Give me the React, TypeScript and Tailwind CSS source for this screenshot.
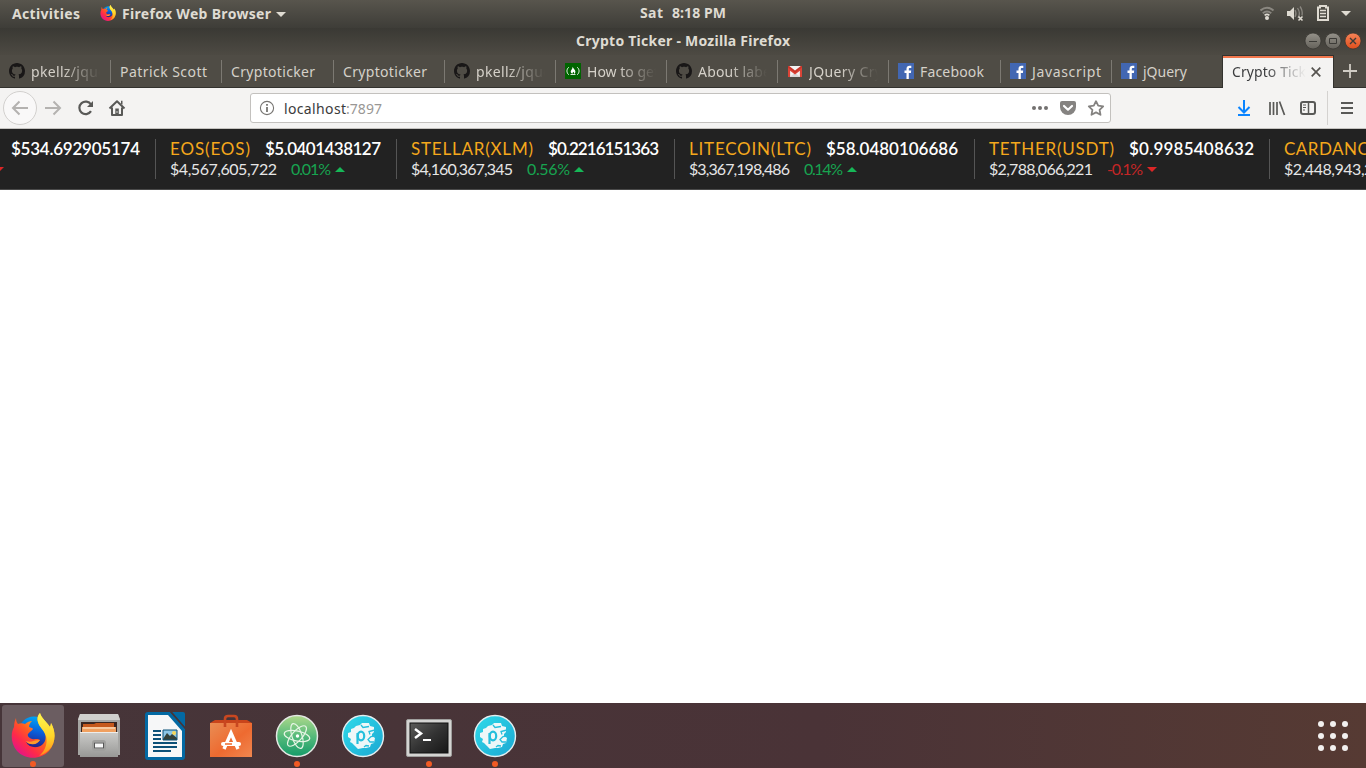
import { useLayoutEffect, useRef } from "react";
import type { ReactNode } from "react";

/* Spreads one line of text so that it fills the width of its box. */
function Fit({ children, className }: { children: string; className: string }) {
  const box = useRef<HTMLSpanElement>(null);
  const text = useRef<HTMLSpanElement>(null);
  useLayoutEffect(() => {
    if (!box.current || !text.current) return;
    text.current.style.letterSpacing = "0px";
    const spare = box.current.clientWidth - text.current.getBoundingClientRect().width;
    text.current.style.letterSpacing = `${spare / Math.max(1, children.length - 1)}px`;
  }, [children]);
  return (
    <span ref={box} className={`block shrink-0 whitespace-pre ${className}`}>
      <span ref={text} className="inline-block">{children}</span>
    </span>
  );
}

function FirefoxLogo({ className, id }: { className: string; id: string }) {
  return (
    <svg viewBox="0 0 44 45" className={className}>
      <defs>
        <linearGradient id={`${id}a`} x1="0.85" y1="0.1" x2="0.15" y2="0.9">
          <stop offset="0" stopColor="#ffd83f" />
          <stop offset="0.25" stopColor="#ffa01e" />
          <stop offset="0.5" stopColor="#ff5a22" />
          <stop offset="0.75" stopColor="#ff2a4a" />
          <stop offset="1" stopColor="#e31587" />
        </linearGradient>
        <linearGradient id={`${id}b`} x1="0.6" y1="0" x2="0.4" y2="1">
          <stop offset="0" stopColor="#00a8f5" />
          <stop offset="0.5" stopColor="#0a5cd8" />
          <stop offset="1" stopColor="#2b1b80" />
        </linearGradient>
        <linearGradient id={`${id}c`} x1="0" y1="0" x2="0" y2="1">
          <stop offset="0" stopColor="#fff750" />
          <stop offset="0.55" stopColor="#ffd428" />
          <stop offset="1" stopColor="#ff8a1a" />
        </linearGradient>
      </defs>
      <circle cx="23" cy="19" r="15.500" fill={`url(#${id}b)`} />
      <path d="M5 5 C5 8 6 10 7 11 C9 10 12 10 14 11 C16 9 19 8 21 8 C19 10 18 12 18 14 C20 15 22 15 22 16 C21 18 18 19 17 21 C16 23 18 25 21 26 C24 27 26 25 29 27 C27 29 26 31 22 31 C19 31 17 30 15 29 C18 35 27 36 32 31 C37 26 34 17 29 13 C26 9 25 4 29 0 C30 5 36 9 39 14 C40 13 40 12 40 10 C45 18 45 30 38 38 C30 47 14 47 6 38 C-1 30 0 19 3 14 C3 10 4 7 5 5Z" fill={`url(#${id}a)`} />
      <path d="M29 0 C30 5 36 9 39 14 L40 10 C45 19 45 30 38 37 C35 40 31 42 28 43 C34 38 37 30 35 23 C33 17 28 14 27 9 C26 5 27 2 29 0Z" fill={`url(#${id}c)`} />
      <path d="M15 28 C20 30 23 27 29 27 C27 30 24 32 20 31 C18 31 16 30 15 28Z" fill="#ff9a2b" />
    </svg>
  );
}

function GithubMark() {
  return (
    <svg viewBox="0 0 16 16" className="size-4 shrink-0" fill="#191717">
      <path d="M8 0C3.58 0 0 3.58 0 8c0 3.54 2.29 6.53 5.47 7.59.4.07.55-.17.55-.38 0-.19-.01-.82-.01-1.49-2.01.37-2.53-.49-2.69-.94-.09-.23-.48-.94-.82-1.13-.28-.15-.68-.52-.01-.53.63-.01 1.08.58 1.23.82.72 1.21 1.87.87 2.33.66.07-.52.28-.87.51-1.07-1.78-.2-3.64-.89-3.64-3.95 0-.87.31-1.59.82-2.15-.08-.2-.36-1.02.08-2.12 0 0 .67-.21 2.2.82.64-.18 1.32-.27 2-.27s1.36.09 2 .27c1.53-1.04 2.2-.82 2.2-.82.44 1.1.16 1.92.08 2.12.51.56.82 1.27.82 2.15 0 3.07-1.87 3.75-3.65 3.95.29.25.54.73.54 1.48 0 1.07-.01 1.93-.01 2.2 0 .21.15.46.55.38A8.01 8.01 0 0 0 16 8c0-4.42-3.58-8-8-8Z" />
    </svg>
  );
}

function FacebookMark() {
  return (
    <svg viewBox="0 0 16 16" className="size-4 shrink-0">
      <rect width="16" height="16" fill="#4267b2" />
      <path d="M8.500 16V9.900h-2V7.500h2V5.800c0-2 1.200-3.100 3-3.100.9 0 1.600.1 1.800.1v2.100H12c-1 0-1.200.5-1.200 1.200v1.400h2.400l-.3 2.400h-2.100V16Z" fill="#fff" />
    </svg>
  );
}

function CampMark() {
  return (
    <svg viewBox="0 0 16 16" className="size-4 shrink-0">
      <rect width="16" height="16" fill="#006400" />
      <path d="M3.800 4.200C1.300 6.200 1.300 9.800 3.800 11.800M12.200 4.200c2.500 2 2.500 5.600 0 7.600M5.500 11.500h5" fill="none" stroke="#d8ead8" />
      <path d="M7.700 3.700c.4 2 2.700 2.800 2.700 5 0 1.200-.8 2-1.500 2.100.5-.9 0-1.500-.7-2-.2.8-.9 1.100-.5 2-1.100-.2-2-1-2-2.200 0-1.800 2-2.300 2-4.900Z" fill="#fff" />
    </svg>
  );
}

function GmailMark() {
  return (
    <svg viewBox="0 0 16 16" className="size-4 shrink-0">
      <path d="M1 3h14v11H1Z" fill="#f2f2f2" />
      <path d="m3 14 5-4.500L13 14Z" fill="#d9d9d9" />
      <path d="M1 14V3.600L8 9l7-5.400V14h-2.100V7.700L8 11.400 3.100 7.700V14Z" fill="#db4437" />
      <path d="M1 3h1.200L8 7.600 13.800 3H15v1.500L8 9.700 1 4.500Z" fill="#c93428" />
    </svg>
  );
}

type TabInfo = { label: string; icon?: ReactNode; size: string; fit: string; fade?: boolean };

const tabs: TabInfo[] = [
  { label: "pkellz/jque", icon: <GithubMark />, size: "w-[111px]", fit: "w-[75px]", fade: true },
  { label: "Patrick Scott", size: "w-[111px]", fit: "w-[87px]" },
  { label: "Cryptoticker", size: "w-[112px]", fit: "w-[84px]" },
  { label: "Cryptoticker", size: "w-[111px]", fit: "w-[84px]" },
  { label: "pkellz/jque", icon: <GithubMark />, size: "w-[111px]", fit: "w-[75px]", fade: true },
  { label: "How to get", icon: <CampMark />, size: "w-[111px]", fit: "w-[72px]", fade: true },
  { label: "About labe", icon: <GithubMark />, size: "w-[111px]", fit: "w-[73px]", fade: true },
  { label: "JQuery Cry", icon: <GmailMark />, size: "w-[111px]", fit: "w-[73px]", fade: true },
  { label: "Facebook", icon: <FacebookMark />, size: "w-[112px]", fit: "w-[64px]" },
  { label: "Javascript", icon: <FacebookMark />, size: "w-[111px]", fit: "w-[69px]" },
  { label: "jQuery", icon: <FacebookMark />, size: "w-[110px]", fit: "w-[44px]" },
];

function Tab({ tab, last }: { tab: TabInfo; last: boolean }) {
  return (
    <div className={`flex h-[23px] shrink-0 items-center gap-1.5 pl-[9px] pr-[10px] ${tab.size} ${last ? "" : "border-r border-[#7c7972]"}`}>
      {tab.icon}
      <div className={`min-w-0 flex-1 pt-0.5 ${tab.fade ? "overflow-hidden [mask-image:linear-gradient(to_right,black_45%,transparent_100%)]" : ""}`}>
        <Fit className={tab.fit}>{tab.label}</Fit>
      </div>
    </div>
  );
}

function SystemPanel() {
  return (
    <div className="flex h-7 bg-linear-to-b from-[#58554d] to-[#3e3d38] text-sm font-bold text-[#dfdbd2]">
      <div className="flex w-[640px] items-center pl-3">
        <Fit className="w-[68px]">Activities</Fit>
        <FirefoxLogo id="p" className="ml-5 size-4 -translate-y-px" />
        <Fit className="ml-1.5 w-[149px]">Firefox Web Browser</Fit>
        <svg viewBox="0 0 10 5" className="ml-[5px] h-[5px] w-2.5"><path d="M0 0h10L5 5Z" fill="#dfdbd2" /></svg>
      </div>
      <div className="flex flex-1 items-center pb-0.5">
        <Fit className="w-[23px]">Sat</Fit>
        <Fit className="ml-[9px] w-[54px]">8:18 PM</Fit>
      </div>
      <svg viewBox="0 0 106 28" className="h-7 w-[106px]">
        <g fill="none" stroke="#8a8780" strokeWidth="2">
          <path d="M.5 10.500q6.500-5.500 13 0" /><path d="M2.800 13.200q4.200-3.500 8.400 0" />
        </g>
        <path d="M4.600 15.300q2.400-2 4.800 0" fill="none" stroke="#dfdbd2" strokeWidth="1.600" />
        <circle cx="7" cy="18" r="2" fill="#dfdbd2" />
        <path d="M27 11h3l4-4v13l-4-4h-3Z" fill="#dfdbd2" />
        <path d="M35 10q2 3.500 0 7M37.500 8q3.500 5 .5 10M40 6.500q3 4 2 9" fill="none" stroke="#8a8780" strokeWidth="1.300" />
        <path d="m38.500 16.500 4 4m0-4-4 4" stroke="#dfdbd2" strokeWidth="1.600" />
        <path d="M58 7.500h2V6h6v1.500h2V20H58Z" fill="none" stroke="#dfdbd2" strokeWidth="2" />
        <path d="M60 10.500h6M60 13.500h6M60 16.500h6" stroke="#dfdbd2" strokeWidth="1.500" />
        <path d="M81 11h10l-5 5Z" fill="#dfdbd2" />
      </svg>
    </div>
  );
}

function TitleBar() {
  return (
    <div className="flex h-[27px] bg-linear-to-b from-[#3a3934] to-[#4d4a43] text-sm font-bold text-[#dfdbd2]">
      <div className="flex flex-1 items-center pb-px pl-[576px]"><Fit className="w-[214px]">Crypto Ticker - Mozilla Firefox</Fit></div>
      <svg viewBox="0 0 62 27" className="h-[27px] w-[62px]">
        <defs>
          <linearGradient id="btn" x1="0" y1="0" x2="0" y2="1"><stop stopColor="#95928a" /><stop offset="1" stopColor="#64615a" /></linearGradient>
          <linearGradient id="cls" x1="0" y1="0" x2="0" y2="1"><stop stopColor="#f68458" /><stop offset="1" stopColor="#e04e1c" /></linearGradient>
        </defs>
        <g stroke="#35342f" strokeWidth=".7">
          <circle cx="9" cy="13" r="8" fill="url(#btn)" /><circle cx="29" cy="13" r="8" fill="url(#btn)" /><circle cx="49" cy="13" r="8" fill="url(#cls)" />
        </g>
        <g stroke="#3c3b37" fill="none" strokeWidth="1">
          <path d="M5 13.500h8" /><path d="M25.500 10.500h7v5h-7Z" /><path d="m46 10 6 6m0-6-6 6" strokeWidth="1.400" />
        </g>
      </svg>
    </div>
  );
}

function TabBar() {
  return (
    <div className="flex h-[33px] bg-[#4f4c45] text-sm text-[#d5d1c9]">
      <div className="flex h-[33px] w-[1222px] items-center border-b border-[#33322e]">
        {tabs.map((tab, i) => <Tab key={i} tab={tab} last={i === tabs.length - 1} />)}
      </div>
      <div className="flex w-28 shrink-0 flex-col border-x border-t border-[#33322e] bg-[#f4f3f2]">
        <div className="h-0.5 bg-[#f1764c]" />
        <div className="flex flex-1 items-center pb-[3px] pl-[9px] text-[#3c3d3f]">
          <div className="w-[74px] overflow-hidden [mask-image:linear-gradient(to_right,black_45%,transparent_100%)]"><Fit className="w-[74px]">Crypto Tick</Fit></div>
          <svg viewBox="0 0 10 10" className="ml-[5px] size-2.5" stroke="#55534f" strokeWidth="1.700"><path d="m.7.7 8.600 8.600m0-8.600L.7 9.300" /></svg>
        </div>
      </div>
      <div className="flex h-[33px] flex-1 items-center border-b border-[#33322e] pl-[9px]">
        <svg viewBox="0 0 14 14" className="size-3.5" stroke="#d0ccc4" strokeWidth="1.800"><path d="M7 0v14M0 7h14" /></svg>
      </div>
    </div>
  );
}

function NavBar() {
  return (
    <div className="flex h-[41px] items-center border-b border-[#c5c3c0] bg-[#f4f3f2] text-sm">
      <svg viewBox="0 0 250 40" className="h-10 w-[250px] shrink-0" fill="none" strokeWidth="2">
        <circle cx="20" cy="20" r="16.500" fill="#f9f8f8" stroke="#d2d0ce" strokeWidth="1" />
        <path d="M28 20H13m6.500-6.500L13 20l6.500 6.500" stroke="#b4b2b0" />
        <path d="M45 20h15m-6.500-6.500L60 20l-6.500 6.500" stroke="#b4b2b0" />
        <path d="M91 16.500A6.300 6.300 0 1 0 91 23.200" stroke="#595957" strokeWidth="2.200" />
        <path d="M93 13v6h-6Z" fill="#595957" />
        <path d="m109.500 20.500 7.500-7.300 7.500 7.300M112 19.500V27h10v-7.500" stroke="#595957" strokeLinejoin="round" />
        <path d="M121 12.800h1.500v4l-1.500-1.500Z" fill="#595957" /><path d="M115.300 27v-6.500h3.500V27Z" fill="#595957" />
        <circle cx="117" cy="24" r=".7" fill="#fff" />
      </svg>
      <div className="flex h-[30px] w-[861px] shrink-0 items-center rounded-[3px] border border-[#c3c1be] bg-white pl-[9px]">
        <svg viewBox="0 0 16 16" className="-ml-px mr-px size-4" fill="none" stroke="#777572">
          <circle cx="8" cy="8" r="6.600" strokeWidth="1.100" /><path d="M8 7v5M8 4v1.800" strokeWidth="1.800" />
        </svg>
        <div className="ml-2 flex flex-1 pt-0.5 text-[#3b3b3b]"><Fit className="w-[62px]">localhost</Fit><Fit className="w-[36px] text-[#999795]">:7897</Fit></div>
        <svg viewBox="0 0 79 28" className="h-7 w-[79px]" fill="none">
          <g fill="#737170"><circle cx="3" cy="14" r="2" /><circle cx="9" cy="14" r="2" /><circle cx="15" cy="14" r="2" /></g>
          <path d="M31 7h12q2 0 2 2v4a8 8 0 0 1-16 0V9q0-2 2-2Z" fill="#858381" />
          <path d="m33 12 4 3.700 4-3.700" stroke="#fff" strokeWidth="2.200" strokeLinecap="round" strokeLinejoin="round" />
          <path d="m65 7.200 2.200 4.500 5 .7-3.600 3.400.9 5-4.500-2.400-4.500 2.400.9-5-3.600-3.400 5-.7Z" stroke="#858381" strokeWidth="1.800" strokeLinejoin="round" />
        </svg>
      </div>
      <svg viewBox="0 0 255 40" className="h-10 w-[255px] shrink-0" fill="none" stroke="#595957" strokeWidth="2">
        <path d="M133 12v12.500m-5.500-5.500 5.500 5.500 5.500-5.500M127 27h12" stroke="#0a84ff" />
        <path d="M159 14v13M162.500 14v13M166 14v13M168.500 13.500l5 13.500" strokeWidth="1.700" />
        <rect x="190" y="14" width="14" height="12" rx="2" /><path d="M197.500 14v12" strokeWidth="1.500" />
        <path d="M192 17h3M192 19.500h3M192 22h2" strokeWidth="1" />
        <path d="M216.500 3v34" stroke="#d4d2d0" strokeWidth="1" />
        <path d="M230 15h12M230 20h12M230 25h12" />
      </svg>
    </div>
  );
}

type Coin = { name: string; price: string; cap: string; pct: string; up: boolean; size: string; w: [string, string, string, string] };

const coins: Coin[] = [
  { name: "EOS(EOS)", price: "$5.0401438127", cap: "$4,567,605,722", pct: "0.01%", up: true, size: "w-[241px]", w: ["w-[80px]", "w-[116px]", "w-[107px]", "w-[40px]"] },
  { name: "STELLAR(XLM)", price: "$0.2216151363", cap: "$4,160,367,345", pct: "0.56%", up: true, size: "w-[278px]", w: ["w-[122px]", "w-[111px]", "w-[102px]", "w-[43px]"] },
  { name: "LITECOIN(LTC)", price: "$58.0480106686", cap: "$3,367,198,486", pct: "0.14%", up: true, size: "w-[300px]", w: ["w-[122px]", "w-[132px]", "w-[101px]", "w-[39px]"] },
  { name: "TETHER(USDT)", price: "$0.9985408632", cap: "$2,788,066,221", pct: "-0.1%", up: false, size: "w-[295px]", w: ["w-[125px]", "w-[125px]", "w-[104px]", "w-[36px]"] },
  { name: "CARDANO(ADA)", price: "$0.0943", cap: "$2,448,943,206", pct: "0.2%", up: true, size: "w-[295px]", w: ["w-[134px]", "w-[80px]", "w-[107px]", "w-[36px]"] },
];

function Arrow({ up }: { up: boolean }) {
  return (
    <svg viewBox="0 0 10 5" className="mt-0.5 h-[5px] w-2.5 shrink-0">
      <path d={up ? "M0 5h10L5 0Z" : "M0 0h10L5 5Z"} fill={up ? "#16b757" : "#dc2626"} />
    </svg>
  );
}

function Ticker() {
  return (
    <div className="flex h-[61px] overflow-hidden border-b border-[#4a4a4a] bg-[#222222] pt-2.5 font-['Lato','Liberation_Sans',sans-serif]">
      <div className="flex h-10 w-[155px] shrink-0 flex-col">
        <div className="flex h-[19px] items-center pl-[11px] text-[17px] font-semibold text-white"><Fit className="w-[129px]">$534.692905174</Fit></div>
        <div className="-ml-1.5 flex h-[21px] items-center"><Arrow up={false} /></div>
      </div>
      {coins.map((c) => (
        <div key={c.name} className={`flex h-10 shrink-0 flex-col border-l border-[#555555] pl-3.5 ${c.size}`}>
          <div className="flex h-[19px] items-center gap-[15px] text-[17px]">
            <Fit className={`text-[#f5a81c] ${c.w[0]}`}>{c.name}</Fit>
            <Fit className={`font-semibold text-white ${c.w[1]}`}>{c.price}</Fit>
          </div>
          <div className="flex h-[21px] items-center text-base">
            <Fit className={`text-[#e6e6e6] ${c.w[2]}`}>{c.cap}</Fit>
            <Fit className={`ml-3.5 mr-1 ${c.w[3]} ${c.up ? "text-[#17a450]" : "text-[#c42626]"}`}>{c.pct}</Fit>
            <Arrow up={c.up} />
          </div>
        </div>
      ))}
    </div>
  );
}

function FilesIcon() {
  return (
    <g>
      <path d="M14 11h38l2 5v36H12V16Z" fill="#a5a5a3" /><path d="M14 11h38l2 6H12Z" fill="#d0d0ce" />
      <path d="M15 19h36v12H15Z" fill="#3a2520" /><path d="M17 21h11l2-1h18v10H17Z" fill="#c5581c" />
      <path d="M16 24h34v7H16Z" fill="#f0a060" /><path d="M17 25h32" stroke="#fff0dc" />
      <path d="M14 29h38v25H14Z" fill="url(#steel)" /><path d="M14 29.500h38" stroke="#ededeb" />
      <rect x="27" y="38" width="12" height="9" rx="2" fill="#c9c9c7" stroke="#a0a09e" strokeWidth="2" />
      <rect x="28.500" y="40" width="9" height="5" fill="#f8f8f8" stroke="#555" />
    </g>
  );
}

function WriterIcon() {
  return (
    <g>
      <path d="M16 9h22l15 17v28q0 3-3 3H16q-3 0-3-3V12q0-3 3-3Z" fill="#0369a3" />
      <path d="M40 9h11q2 0 2 2v13Z" fill="#0369a3" />
      <path d="M38 9h2l13 15v2Z" fill="#463539" />
      <path d="M16 12h20l14 16v26H16Z" fill="#f6f7f8" />
      <path d="M21 28h8M21 32h8M21 36h8M21 40h24M21 44h24M21 48h18" stroke="#0b5078" strokeWidth="2" />
      <path d="M31 27h14v10H31Z" fill="#8bc5e5" /><circle cx="42" cy="30" r="2" fill="#f6d75a" />
      <path d="m31 36 4-6 3 3 2-2 5 4v2H31Z" fill="#334039" />
      <path d="M31 27h14v10H31Z" fill="none" stroke="#0b5078" />
    </g>
  );
}

function SoftwareIcon() {
  return (
    <g>
      <path d="m12 20 5-3h32l5 3v4H12Z" fill="#c9441b" />
      <path d="M12 20h42v34H12Z" fill="url(#bag)" />
      <path d="M27 24v-8q0-3 3-3h6q3 0 3 3v8" fill="none" stroke="#c84720" strokeWidth="2.600" />
      <path d="m26 46 7-16 7 16" fill="none" stroke="#fff" strokeWidth="3.400" />
      <path d="M25 41h16" stroke="#fff" strokeWidth="4" strokeLinecap="round" /><path d="M27 41h7" stroke="#ee6a2c" strokeWidth="1.500" />
    </g>
  );
}

function AtomIcon() {
  return (
    <g>
      <circle cx="33" cy="33" r="20.500" fill="url(#atom)" stroke="#e3e7e3" strokeWidth="1.500" />
      <g fill="none" stroke="#e7f5e5" strokeWidth="1.200">
        <ellipse cx="33" cy="33" rx="13" ry="5" transform="rotate(12 33 33)" />
        <ellipse cx="33" cy="33" rx="13" ry="5" transform="rotate(72 33 33)" />
        <ellipse cx="33" cy="33" rx="13" ry="5" transform="rotate(132 33 33)" />
      </g>
      <circle cx="33.500" cy="33" r="1.700" fill="#fff" />
    </g>
  );
}

function GearIcon() {
  return (
    <g>
      <circle cx="33" cy="33" r="20.500" fill="url(#cyan)" stroke="#e4eef0" strokeWidth="1.400" />
      <path d="m26 23 4-1 2-2 7 0 1 3 4 1 0 5-2 2 0 2 3 2-1 5-3 1-1 3-4 1-3 0-5 1-3-3-3-3-2-1 1-3-3-2 0-4 3-1 0-3 3-1Z" fill="#eef7f8" />
      <ellipse cx="31" cy="33" rx="3.200" ry="4.300" fill="none" stroke="#25bfdc" strokeWidth="2.200" />
      <path d="M27.500 30v11" stroke="#25bfdc" strokeWidth="2.200" />
      <path d="m31 22 2 2.500 6-1M45 27l-6 1.500 1 3M45 33l-4 .5-3 3 2 2.500h4M34 44l2-1.500 3 .5" fill="none" stroke="#25bfdc" strokeWidth="1.300" />
    </g>
  );
}

function TerminalIcon() {
  return (
    <g>
      <rect x="10.500" y="16.500" width="45" height="37" rx="1.500" fill="#d4d4d2" stroke="#9f9f9d" />
      <rect x="14" y="20" width="38" height="30" fill="url(#screen)" stroke="#111" />
      <path d="m19 26 6 4.500-6 4.500" fill="none" stroke="#fff" strokeWidth="2.500" /><path d="M27 37h8" stroke="#fff" strokeWidth="2" />
    </g>
  );
}

const launchers: { art: ReactNode; running: boolean }[] = [
  { art: <FilesIcon />, running: false },
  { art: <WriterIcon />, running: false },
  { art: <SoftwareIcon />, running: false },
  { art: <AtomIcon />, running: true },
  { art: <GearIcon />, running: false },
  { art: <TerminalIcon />, running: true },
  { art: <GearIcon />, running: true },
];

function RunningDot() {
  return <span className="absolute bottom-[1px] left-[30px] size-1.5 rounded-full bg-[#f15a24]" />;
}

function Dock() {
  return (
    <div className="flex h-[65px] bg-linear-to-r from-[#463539] via-[#4a3337] via-60% to-[#563a33]">
      <div className="relative flex w-[66px] justify-center pt-0.5">
        <div className="flex h-[62px] w-[62px] justify-center rounded-[3px] bg-[#6b5d61] pt-2"><FirefoxLogo id="d" className="h-[45px] w-11" /></div>
        <RunningDot />
      </div>
      {launchers.map((l, i) => (
        <div key={i} className="relative w-[66px]">
          <svg viewBox="0 0 66 65" className="h-[65px] w-[66px]">
            <defs>
              <linearGradient id="steel" x1="0" y1="0" x2="0" y2="1"><stop stopColor="#cbcbc9" /><stop offset="1" stopColor="#989896" /></linearGradient>
              <linearGradient id="bag" x1="0" y1="0" x2="1" y2="1"><stop stopColor="#e98d54" /><stop offset=".55" stopColor="#ee6a30" /><stop offset="1" stopColor="#f08750" /></linearGradient>
              <linearGradient id="atom" x1="0" y1="0" x2="0" y2="1"><stop stopColor="#aed98b" /><stop offset=".55" stopColor="#4fb779" /><stop offset="1" stopColor="#159b69" /></linearGradient>
              <linearGradient id="cyan" x1="0" y1="0" x2="1" y2="1"><stop stopColor="#2edbea" /><stop offset="1" stopColor="#1ba7d2" /></linearGradient>
              <linearGradient id="screen" x1="0" y1="0" x2="1" y2="1"><stop stopColor="#5b5b59" /><stop offset=".5" stopColor="#333" /><stop offset="1" stopColor="#171717" /></linearGradient>
            </defs>
            {l.art}
          </svg>
          {l.running && <RunningDot />}
        </div>
      ))}
      <div className="flex flex-1 items-center justify-end pr-[18px] pt-px">
        <div className="grid grid-cols-3 gap-1.5">
          {Array.from({ length: 9 }, (_, i) => <span key={i} className="size-1.5 rounded-full bg-[#f2f0ef]" />)}
        </div>
      </div>
    </div>
  );
}

export default function App() {
  return (
    <div className="flex h-screen w-[1366px] flex-col overflow-hidden bg-white font-['Noto_Sans','Open_Sans',sans-serif]">
      <SystemPanel />
      <TitleBar />
      <TabBar />
      <NavBar />
      <Ticker />
      <main className="flex-1 bg-white" />
      <Dock />
    </div>
  );
}
